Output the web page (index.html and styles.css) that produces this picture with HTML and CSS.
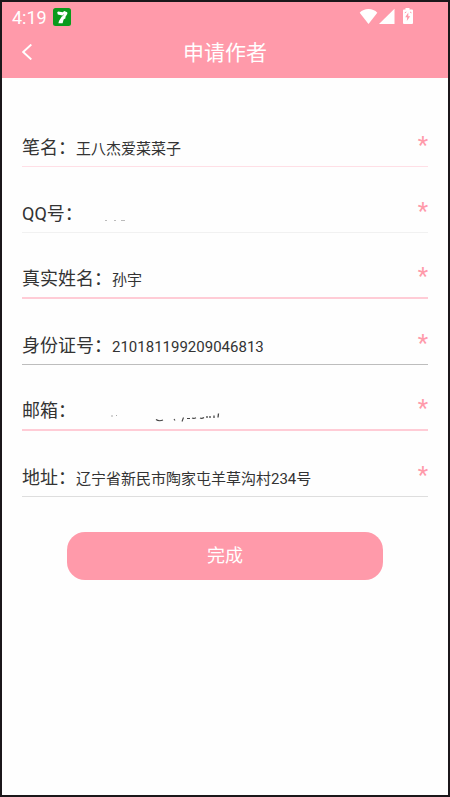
FILE: index.html
```html
<!DOCTYPE html>
<html lang="zh-CN">
<head>
<meta charset="utf-8">
<meta name="viewport" content="width=device-width, initial-scale=1">
<title>申请作者</title>
<link rel="stylesheet" href="styles.css">
</head>
<body>
<div class="screen">
  <header class="header">
    <div class="status">
      <span class="time">4:19</span>
      <svg class="app-icon" viewBox="0 0 18 18" aria-hidden="true"><rect width="18" height="18" rx="2.5" fill="#0a9a1c"/><path d="M4.200 4.200l1-.8 4.600.8 1.400-1.200 3 1.200.2 1.600-2.200 3.400.6.8-2.200 1.600-1 3.600H5.400l.6-2.200 3.400-5.400-4.600-1z" fill="#fff"/><path d="M9 8.500l1.600-2" stroke="#0a9a1c" stroke-width=".7"/></svg>
      <svg class="signals" viewBox="0 0 56 18" aria-hidden="true" fill="#fff">
        <path d="M.7 4.800C5-.2 14-.2 18.300 4.800L9.500 16z"/>
        <path d="M20 16L35.500.8V16z"/>
        <path d="M46.500 1.500V0h4v1.500H53q1 0 1 1V15q0 1-1 1h-8q-1 0-1-1V2.500q0-1 1-1z"/>
        <path d="M49.300 4.500L46.200 9.200h2L47.800 13l3.400-4.800h-1.900z" fill="#ff9aaa"/>
        <path d="M45.800 4.800l1.500-.8M51 4l1.500.8" stroke="#ff9aaa" stroke-width="1"/>
      </svg>
    </div>
    <div class="nav">
      <button class="back" type="button" aria-label="返回"><svg viewBox="0 0 10 16" aria-hidden="true"><path d="M9.300.5L1.200 8l8.100 7.500" fill="none" stroke="#fff" stroke-width="1.900"/></svg></button>
      <h1>申请作者</h1>
    </div>
  </header>
  <form class="form">
    <div class="field pale"><label for="pen">笔名：</label><input id="pen" type="text" value="王八杰爱菜菜子" required><span class="star">*</span></div>
    <div class="field faint"><label for="qq">QQ号：</label><span class="entry"><input id="qq" type="text" required><svg class="traces" viewBox="0 0 150 24" aria-hidden="true"><path d="M22 17.500h2M31 17.500h2M38 17.500h4" stroke="#bbb" stroke-width="1"/></svg></span><span class="star">*</span></div>
    <div class="field pink"><label for="name">真实姓名：</label><input id="name" type="text" value="孙宇" required><span class="star">*</span></div>
    <div class="field grey"><label for="idno">身份证号：</label><input id="idno" type="text" value="210181199209046813" required><span class="star">*</span></div>
    <div class="field pink"><label for="mail">邮箱：</label><span class="entry"><input id="mail" type="text" required><svg class="traces" viewBox="0 0 150 24" aria-hidden="true" fill="none" stroke="#444"><path d="M35 16h2M40 15.500h1" stroke="#aaa"/><path d="M80 19.500q3 2.200 7 .5" stroke-width="1.200"/><path d="M98 19l1 1.500M107.500 17.500l-1.500 4M111 18.500h3M116 18q2 .8 4-.3M124 18q2 1 4-.5" stroke-width="1.100"/><path d="M131 18v-2M134 18v-2M138 18v-2.500M142 17.500l.5-4" stroke-width="1.300"/></svg></span><span class="star">*</span></div>
    <div class="field light"><label for="addr">地址：</label><input id="addr" type="text" value="辽宁省新民市陶家屯羊草沟村234号" required><span class="star">*</span></div>
    <button class="submit" type="button">完成</button>
  </form>
</div>
</body>
</html>
```
FILE: styles.css
```css
* { box-sizing: border-box; }
body {
  margin: 0;
  font-family: Roboto, "Noto Sans CJK SC", sans-serif;
  color: #333;
}
.screen {
  min-height: 100vh;
  border: 2px solid #1b171a;
  background: #fefefe;
}
.header {
  background: #ff9aaa;
  color: #fff;
  padding-bottom: 4px;
}
.status {
  display: flex;
  align-items: center;
  height: 30px;
  padding: 0 33px 0 10px;
}
.time { font-size: 18px; }
.app-icon { width: 18px; height: 18px; margin-left: 6px; }
.signals { width: 56px; height: 18px; margin-left: auto; }
.nav {
  display: grid;
  grid-template-columns: 48px 1fr 48px;
  align-items: center;
  height: 42px;
}
.back {
  display: flex;
  height: 40px;
  align-items: center;
  align-self: start;
  padding: 0 0 0 20px;
  border: 0;
  background: none;
}
.back svg { width: 10px; height: 16px; }
h1 {
  margin: 0;
  font-size: 21px;
  font-weight: 400;
  line-height: 30px;
  text-align: center;
}
.form {
  display: flex;
  flex-direction: column;
  padding: 23px 20px;
}
.field {
  display: flex;
  align-items: flex-end;
  height: 66px;
  padding-bottom: 5px;
  border-bottom: 1px solid;
}
.pale { border-color: #ffdfe6; }
.faint { border-color: #f1f1f1; }
.pink { border-bottom: 2px solid #ffccd6; }
.grey { border-color: #bdbdbd; }
.light { border-color: #dedede; }
label {
  font-size: 18px;
  line-height: 26px;
}
input {
  flex: 1;
  min-width: 0;
  height: 24px;
  padding: 0;
  border: 0;
  outline: 0;
  background: none;
  color: #333;
  font: 15px/24px Roboto, "Noto Sans CJK SC", sans-serif;
}
.entry { position: relative; display: flex; flex: 1; }
.traces { position: absolute; left: 0; bottom: 0; width: 150px; height: 24px; }
.star {
  color: #ff9aaa;
  font-size: 24px;
  line-height: 32px;
}
.submit {
  width: 78%;
  height: 48px;
  margin: 35px auto 0;
  border: 0;
  border-radius: 18px;
  background: #ff9aaa;
  color: #fff;
  font: 18px/26px Roboto, "Noto Sans CJK SC", sans-serif;
}
```
